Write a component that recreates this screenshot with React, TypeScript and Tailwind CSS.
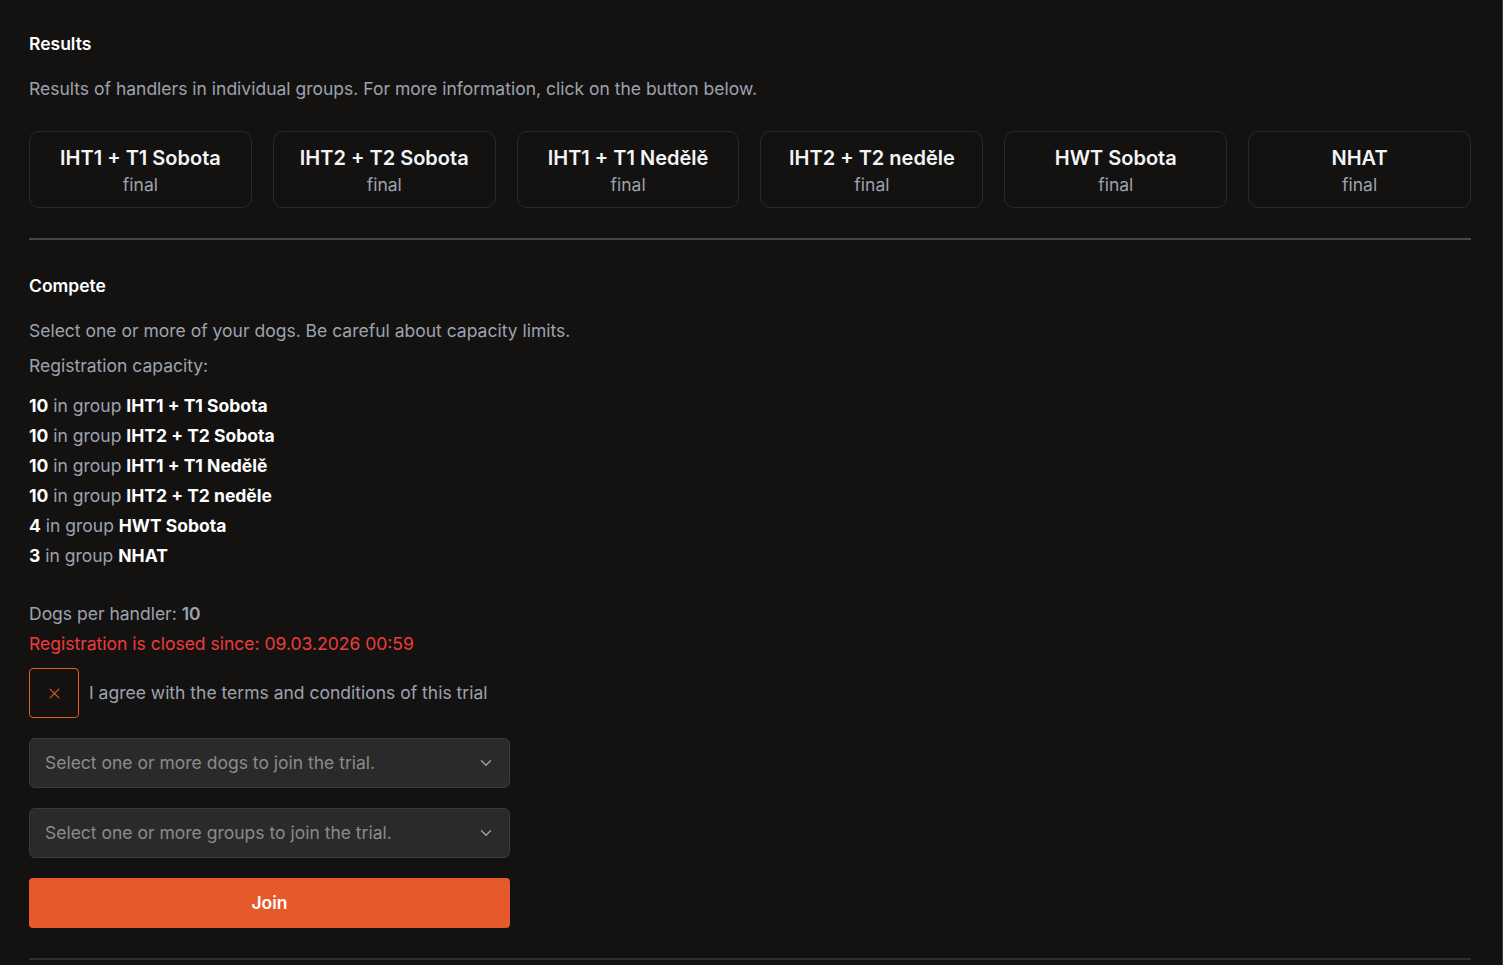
import React from "react";

const groups = [
  "IHT1 + T1 Sobota",
  "IHT2 + T2 Sobota",
  "IHT1 + T1 Nedělě",
  "IHT2 + T2 neděle",
  "HWT Sobota",
  "NHAT",
];
const caps = [10, 10, 10, 10, 4, 3];

function Chevron() {
  return (
    <svg width="18" height="18" viewBox="0 0 24 24" fill="none" stroke="#a3a3a3" strokeWidth="1.8" strokeLinecap="round" strokeLinejoin="round">
      <path d="m6 9 6 6 6-6" />
    </svg>
  );
}

export default function App() {
  return (
    <div
      className="min-h-screen w-[1503px] bg-[#131211] border-r border-[#3a3a3a] pl-[29px] pr-[31px] pt-[32px] pb-[6px] text-[17.5px]"
      style={{ fontFamily: "Inter, 'Noto Sans', sans-serif" }}
    >
      <h2 className="text-white font-semibold leading-[24px]">Results</h2>
      <p className="mt-[21px] text-[#9ca3af] leading-[24px]">
        Results of handlers in individual groups. For more information, click on the button below.
      </p>
      <div className="mt-[30px] grid grid-cols-6 gap-[21px]">
        {groups.map((g) => (
          <div
            key={g}
            className="h-[77px] pt-[4px] rounded-[10px] border border-[#2a2a2a] flex flex-col items-center justify-center"
          >
            <div className="text-[#f3f4f6] font-semibold text-[20px] leading-[27px]">{g}</div>
            <div className="text-[#9ca3af] leading-[26px]">final</div>
          </div>
        ))}
      </div>
      <div className="mt-[30px] h-[2px] bg-[#454545]" />

      <h2 className="mt-[34px] text-white font-semibold leading-[24px]">Compete</h2>
      <p className="mt-[21px] text-[#9ca3af] leading-[24px]">
        Select one or more of your dogs. Be careful about capacity limits.
      </p>
      <p className="mt-[11px] text-[#9ca3af] leading-[24px]">Registration capacity:</p>
      <ul className="mt-[13px]">
        {groups.map((g, i) => (
          <li key={g} className="leading-[30px] text-[#9ca3af]">
            <span className="text-white font-bold">{caps[i]}</span> in group{" "}
            <span className="text-white font-bold">{g}</span>
          </li>
        ))}
      </ul>
      <p className="mt-[28px] text-[#9ca3af] leading-[30px]">
        Dogs per handler: <span className="font-semibold">10</span>
      </p>
      <p className="text-[#ef3b3b] leading-[30px]">Registration is closed since: 09.03.2026 00:59</p>
      <div className="mt-[9px] flex items-center gap-[10px]">
        <div className="w-[50px] h-[50px] rounded-[4px] border border-[#e5592b] flex items-center justify-center">
          <svg width="15" height="15" viewBox="0 0 24 24" fill="none" stroke="#e5592b" strokeWidth="1.8" strokeLinecap="round">
            <path d="M5 5l14 14M19 5L5 19" />
          </svg>
        </div>
        <span className="text-[#9ca3af]">I agree with the terms and conditions of this trial</span>
      </div>
      <div className="w-[481px]">
        <div className="mt-[20px] h-[50px] rounded-[6px] border border-[#3a3a3a] bg-[#2a2a2a] flex items-center justify-between pl-[15px] pr-[14px]">
          <span className="text-[#8a8a8a]">Select one or more dogs to join the trial.</span>
          <Chevron />
        </div>
        <div className="mt-[20px] h-[50px] rounded-[6px] border border-[#3a3a3a] bg-[#2a2a2a] flex items-center justify-between pl-[15px] pr-[14px]">
          <span className="text-[#8a8a8a]">Select one or more groups to join the trial.</span>
          <Chevron />
        </div>
        <button className="mt-[20px] w-full h-[50px] rounded-[4px] bg-[#e5592b] text-white font-semibold">
          Join
        </button>
      </div>
      <div className="mt-[30px] h-[2px] bg-[#2e2e2e]" />
    </div>
  );
}
